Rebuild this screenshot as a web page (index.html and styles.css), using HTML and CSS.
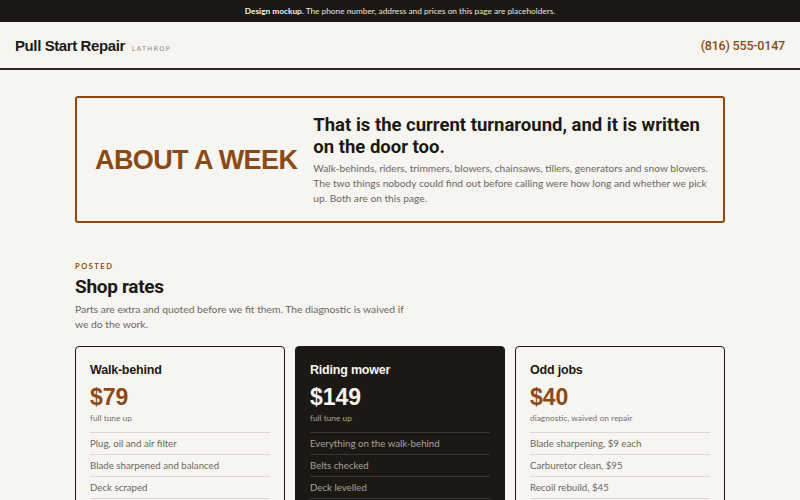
FILE: index.html
```html
<!DOCTYPE html>
<html lang="en">
<head>
    <meta charset="UTF-8">
    <meta name="viewport" content="width=device-width, initial-scale=1.0">
    <title>Pull Start Repair</title>
    <link rel="stylesheet" href="styles.css">
</head>
<body>
    <div class="notice"><strong>Design mockup.</strong> The phone number, address and prices on this page are placeholders.</div>

    <header class="site-header">
        <div class="brand">Pull Start Repair <span class="brand-town">Lathrop</span></div>
        <a class="phone" href="#">(816) 555-0147</a>
    </header>

    <main class="page">
        <section class="turnaround">
            <div class="turnaround-big">ABOUT A WEEK</div>
            <div class="turnaround-copy">
                <h1>That is the current turnaround, and it is written on the door too.</h1>
                <p>Walk-behinds, riders, trimmers, blowers, chainsaws, tillers, generators and snow blowers. The two things nobody could find out before calling were how long and whether we pick up. Both are on this page.</p>
            </div>
        </section>

        <section class="rates">
            <div class="eyebrow">Posted</div>
            <h2>Shop rates</h2>
            <p class="rates-intro">Parts are extra and quoted before we fit them. The diagnostic is waived if we do the work.</p>

            <div class="rate-cards">
                <div class="rate-card">
                    <h3>Walk-behind</h3>
                    <div class="price">$79</div>
                    <div class="price-note">full tune up</div>
                    <ul>
                        <li>Plug, oil and air filter</li>
                        <li>Blade sharpened and balanced</li>
                        <li>Deck scraped</li>
                        <li>Carb cleaned if it needs it</li>
                    </ul>
                </div>
                <div class="rate-card dark">
                    <h3>Riding mower</h3>
                    <div class="price">$149</div>
                    <div class="price-note">full tune up</div>
                    <ul>
                        <li>Everything on the walk-behind</li>
                        <li>Belts checked</li>
                        <li>Deck levelled</li>
                        <li>Battery tested</li>
                    </ul>
                </div>
                <div class="rate-card">
                    <h3>Odd jobs</h3>
                    <div class="price">$40</div>
                    <div class="price-note">diagnostic, waived on repair</div>
                    <ul>
                        <li>Blade sharpening, $9 each</li>
                        <li>Carburetor clean, $95</li>
                        <li>Recoil rebuild, $45</li>
                        <li>Pickup and drop-off, $25</li>
                    </ul>
                </div>
            </div>
        </section>
    </main>
</body>
</html>
```

FILE: styles.css
```css
body {
    margin: 0;
    background-color: #f7f5f1;
    color: #1c1915;
    font-family: Lato, "Noto Sans", sans-serif;
}

h1, h2, h3 {
    margin: 0;
}

/* top strip */
.notice {
    background-color: #1c1915;
    color: #e9e4da;
    font-size: 8.3px;
    height: 22px;
    line-height: 23px;
    text-align: center;
}

.notice strong {
    color: #f4efe4;
}

/* header */
.site-header {
    display: flex;
    justify-content: space-between;
    align-items: center;
    height: 46px;
    padding: 0 15px;
    border-bottom: 2px solid #2a2621;
}

.brand {
    font-family: "Liberation Sans", Arial, sans-serif;
    font-weight: bold;
    font-size: 15px;
    letter-spacing: -0.4px;
}

.brand-town {
    margin-left: 3px;
    font-family: "DejaVu Sans", sans-serif;
    font-weight: normal;
    font-size: 6.5px;
    letter-spacing: 1.3px;
    text-transform: uppercase;
    color: #8a857d;
}

.phone {
    color: #8b4a14;
    font-family: Roboto, "Liberation Sans", sans-serif;
    font-weight: 500;
    font-size: 12.5px;
    letter-spacing: -0.2px;
    text-decoration: none;
}

.page {
    max-width: 650px;
    margin: 0 auto;
    padding-top: 26px;
}

/* turnaround box */
.turnaround {
    display: flex;
    align-items: center;
    gap: 16px;
    padding: 16px 12px 15px 18px;
    border: 2px solid #8b4a14;
    border-radius: 3px;
}

.turnaround-big {
    flex: none;
    color: #8b4a14;
    font-family: "Liberation Sans", Arial, sans-serif;
    font-weight: bold;
    font-size: 27px;
    letter-spacing: -0.6px;
}

.turnaround-copy h1 {
    max-width: 392px;
    font-family: Roboto, "Liberation Sans", sans-serif;
    font-weight: bold;
    font-size: 18.5px;
    line-height: 22px;
}

.turnaround-copy p {
    margin: 3px 0 0;
    color: #6b665f;
    font-size: 10.2px;
    line-height: 15px;
}

/* rates */
.rates {
    padding-top: 39px;
}

.eyebrow {
    color: #8b4a14;
    font-size: 7.5px;
    font-weight: bold;
    letter-spacing: 1.5px;
    text-transform: uppercase;
}

.rates h2 {
    margin: 4px 0 1px;
    font-family: Roboto, "Liberation Sans", sans-serif;
    font-weight: bold;
    font-size: 19px;
    letter-spacing: -0.3px;
}

.rates-intro {
    max-width: 340px;
    margin: 4px 0 14px;
    color: #6b665f;
    font-size: 10.3px;
    line-height: 15px;
}

.rate-cards {
    display: grid;
    grid-template-columns: repeat(3, 1fr);
    gap: 10px;
}

.rate-card {
    padding: 16px 14px 14px;
    border: 1.5px solid #1c1915;
    border-radius: 4px;
}

.rate-card h3 {
    font-family: "Liberation Sans", Arial, sans-serif;
    font-size: 12.5px;
    letter-spacing: -0.2px;
}

.price {
    margin-top: 7px;
    color: #8b4a14;
    font-family: "Liberation Sans", Arial, sans-serif;
    font-weight: bold;
    font-size: 23px;
    line-height: 27px;
}

.price-note {
    margin-top: 2px;
    color: #76716a;
    font-size: 8.4px;
}

.rate-card ul {
    list-style: none;
    margin: 9px 0 0;
    padding: 0;
    border-top: 1px solid #dedad3;
}

.rate-card li {
    padding: 5px 0 5px;
    border-bottom: 1px solid #dedad3;
    color: #6b665f;
    font-size: 9.7px;
    line-height: 11px;
}

.rate-card.dark {
    background-color: #1c1915;
}

.rate-card.dark h3,
.rate-card.dark .price {
    color: #f7f5f1;
}

.rate-card.dark .price-note,
.rate-card.dark li {
    color: #a9a398;
}

.rate-card.dark ul,
.rate-card.dark li {
    border-color: #3b3630;
}
```
